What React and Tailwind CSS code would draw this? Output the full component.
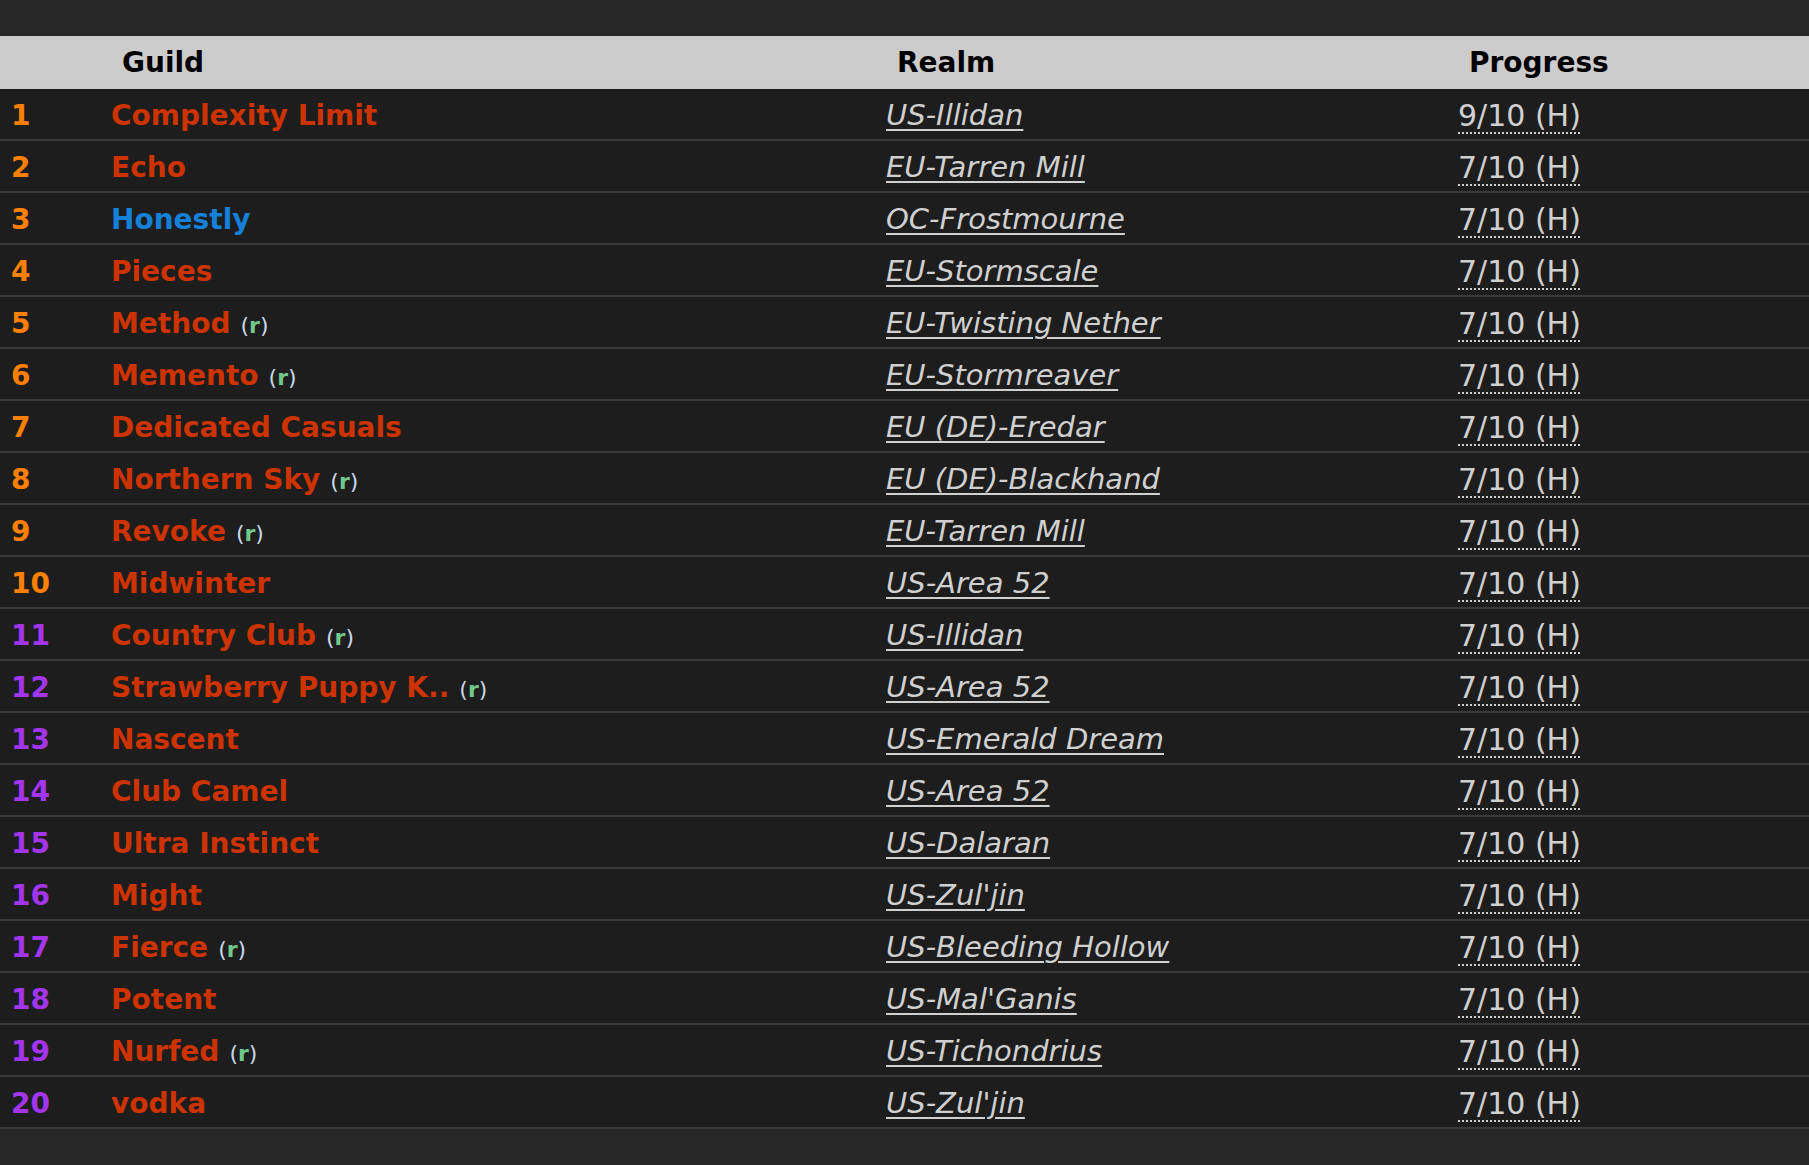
import React from 'react';

const guilds = [
    { name: 'Complexity Limit', realm: 'US-Illidan', progress: '9/10 (H)' },
    { name: 'Echo', realm: 'EU-Tarren Mill', progress: '7/10 (H)' },
    { name: 'Honestly', realm: 'OC-Frostmourne', progress: '7/10 (H)', alliance: true },
    { name: 'Pieces', realm: 'EU-Stormscale', progress: '7/10 (H)' },
    { name: 'Method', realm: 'EU-Twisting Nether', progress: '7/10 (H)', r: true },
    { name: 'Memento', realm: 'EU-Stormreaver', progress: '7/10 (H)', r: true },
    { name: 'Dedicated Casuals', realm: 'EU (DE)-Eredar', progress: '7/10 (H)' },
    { name: 'Northern Sky', realm: 'EU (DE)-Blackhand', progress: '7/10 (H)', r: true },
    { name: 'Revoke', realm: 'EU-Tarren Mill', progress: '7/10 (H)', r: true },
    { name: 'Midwinter', realm: 'US-Area 52', progress: '7/10 (H)' },
    { name: 'Country Club', realm: 'US-Illidan', progress: '7/10 (H)', r: true },
    { name: 'Strawberry Puppy K..', realm: 'US-Area 52', progress: '7/10 (H)', r: true },
    { name: 'Nascent', realm: 'US-Emerald Dream', progress: '7/10 (H)' },
    { name: 'Club Camel', realm: 'US-Area 52', progress: '7/10 (H)' },
    { name: 'Ultra Instinct', realm: 'US-Dalaran', progress: '7/10 (H)' },
    { name: 'Might', realm: "US-Zul'jin", progress: '7/10 (H)' },
    { name: 'Fierce', realm: 'US-Bleeding Hollow', progress: '7/10 (H)', r: true },
    { name: 'Potent', realm: "US-Mal'Ganis", progress: '7/10 (H)' },
    { name: 'Nurfed', realm: 'US-Tichondrius', progress: '7/10 (H)', r: true },
    { name: 'vodka', realm: "US-Zul'jin", progress: '7/10 (H)' },
];

const font = { fontFamily: '"DejaVu Sans", "Liberation Sans", sans-serif' };

export default function App() {
    return (
        <div className="min-h-screen bg-[#272727] pt-[36px]" style={font}>
            {/* header */}
            <div className="grid grid-cols-[100px_775px_572px_1fr] h-[53px] items-center bg-[#cccccc] text-black font-bold text-[28px]">
                <div></div>
                <div className="pl-[22px]">Guild</div>
                <div className="pl-[22px]">Realm</div>
                <div className="pl-[22px]">Progress</div>
            </div>

            {guilds.map((g, i) => (
                <div
                    key={i}
                    className="grid grid-cols-[100px_775px_572px_1fr] h-[52px] items-center bg-[#1d1d1d] border-b-2 border-[#3b3b3b] pt-[3px]"
                >
                    <div className={`pl-[11px] font-bold text-[28px] ${i < 10 ? 'text-[#ff8000]' : 'text-[#a335ee]'}`}>
                        {i + 1}
                    </div>
                    <div className="pl-[11px] flex items-baseline gap-[10px]">
                        <span className={`font-bold text-[28px] ${g.alliance ? 'text-[#1480d8]' : 'text-[#cc3300]'}`}>
                            {g.name}
                        </span>
                        {g.r && (
                            <span className="text-[22px] text-[#c9d6e8]">
                                (<span className="font-bold text-[#72c88c]">r</span>)
                            </span>
                        )}
                    </div>
                    <div className="pl-[11px]">
                        <span className="italic text-[29px] text-[#d0d0d0] underline decoration-2 underline-offset-[4px]">
                            {g.realm}
                        </span>
                    </div>
                    <div className="pl-[11px]">
                        <span className="text-[30px] text-[#d0d0d0] underline decoration-dotted decoration-2 underline-offset-[6px]">
                            {g.progress}
                        </span>
                    </div>
                </div>
            ))}
        </div>
    );
}
